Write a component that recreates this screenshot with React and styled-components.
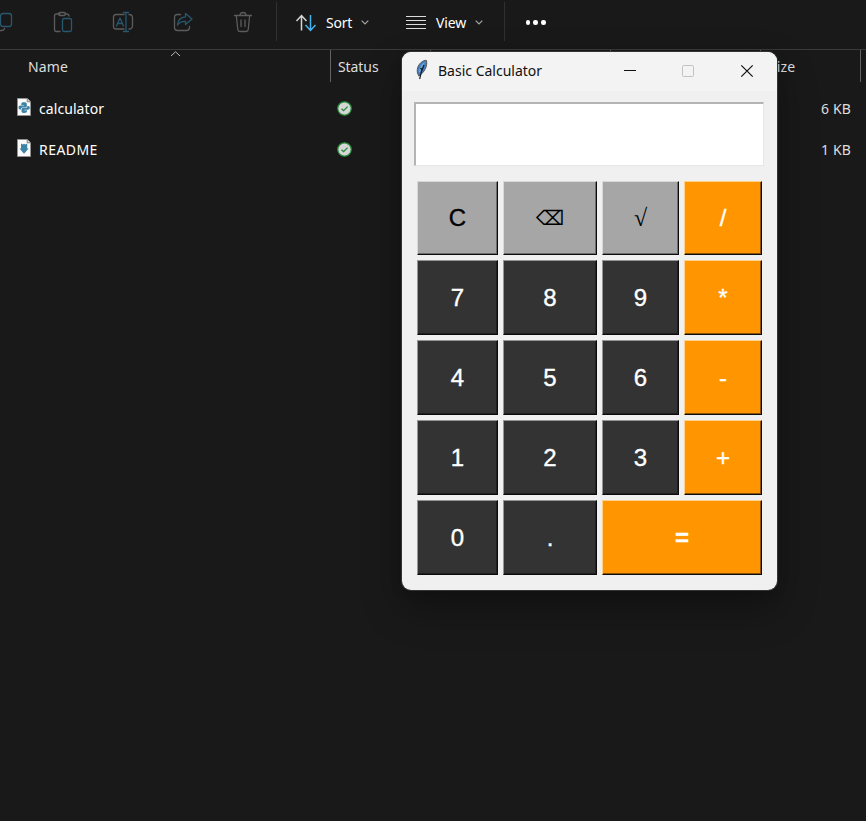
import React from "react";
import styled, { createGlobalStyle } from "styled-components";

const GlobalStyle = createGlobalStyle`
  * { box-sizing: border-box; }
  body { margin: 0; background: #191919; overflow: hidden; }
`;

const Explorer = styled.main`
  position: relative;
  width: 866px;
  height: 821px;
  overflow: hidden;
  background: #191919;
  color: #fff;
  font-family: "Noto Sans", "Open Sans", sans-serif;
  font-size: 14px;
`;

const Toolbar = styled.header`
  display: flex;
  height: 50px;
  border-bottom: 1px solid #3b3b3b;
`;

const IconGroup = styled.div`
  display: flex;
  gap: 36px;
  width: 277px;
  height: 43px;
  margin-left: -9px;
  padding-top: 10px;
  flex: none;
`;

const ToolIcon = styled.svg`
  width: 24px;
  height: 24px;
  flex: none;
  fill: none;
  stroke: #5c5c5c;
  stroke-width: 1.3;
  stroke-linecap: round;
  stroke-linejoin: round;
  .accent { stroke: #28586f; }
`;

const MenuGroup = styled.div`
  display: flex;
  align-items: center;
  width: 229px;
  height: 39px;
  margin: 2px 0 0 8px;
  padding-top: 2px;
  border: solid #303030;
  border-width: 0 1px;
`;

const MenuButton = styled.div`
  display: flex;
  align-items: center;
  width: 110px;
  padding-left: 19px;
  height: 38px;
`;

const MenuLabel = styled.span`
  width: ${(p) => p.$width}px;
  margin-left: ${(p) => p.$gap}px;
  letter-spacing: ${(p) => p.$track}px;
  white-space: nowrap;
`;

const Glyph = styled.svg`
  display: block;
  flex: none;
  fill: none;
  overflow: visible;
`;

const More = styled.div`
  display: flex;
  gap: 3.4px;
  margin: 20px 0 0 20.5px;
`;

const Dot = styled.i`
  width: 4.5px;
  height: 4.5px;
  border-radius: 50%;
  background: #fff;
`;

const ColumnHeader = styled.div`
  display: grid;
  grid-template-columns: 331px 100px 180px 150px 100px;
  height: 32px;
  color: #dedede;
`;

const HeaderCell = styled.div`
  position: relative;
  padding: 7px 0 0 ${(p) => p.$inset}px;
  line-height: 20px;
  letter-spacing: ${(p) => p.$track || 0}px;
  border-right: 1px solid #636363;
`;

const SortMark = styled(Glyph)`
  position: absolute;
  left: 170px;
  top: 1px;
`;

const FileList = styled.div`
  padding-top: 6px;
`;

const FileRow = styled.div`
  display: grid;
  grid-template-columns: 39px 298px 1fr 100px;
  align-items: center;
  height: 41px;
`;

const IconCell = styled.div`
  padding: 0 0 3px 17px;
`;

const FileName = styled.span`
  letter-spacing: ${(p) => p.$track}px;
`;

const FileSize = styled.span`
  padding-right: 15px;
  text-align: right;
  color: #dedede;
  letter-spacing: 0.15px;
`;

const Window = styled.section`
  position: absolute;
  left: 402px;
  top: 52px;
  width: 375px;
  height: 538px;
  border-radius: 9px;
  overflow: hidden;
  background: #f0f0f0;
`;

const WindowShadow = styled.div`
  position: absolute;
  left: 402px;
  top: 52px;
  width: 375px;
  height: 538px;
  border-radius: 9px;
  box-shadow: 0 0 0 1px #343434, 0 18px 40px rgba(0, 0, 0, 0.32), 0 2px 12px rgba(0, 0, 0, 0.15);
`;

const TitleBar = styled.div`
  display: flex;
  height: 39px;
  background: #f3f3f3;
  color: #111;
  padding: 7px 0 0 12px;
`;

const Title = styled.h1`
  width: 186px;
  margin: 2px 0 0 9px;
  font-size: 14px;
  font-weight: 400;
  line-height: 20px;
  letter-spacing: 0;
`;

const WindowControls = styled.div`
  display: flex;
  gap: 46px;
  margin: 6px 0 0 0;
`;

const Display = styled.div`
  width: 350px;
  height: 64px;
  margin: 11px 0 0 12px;
  background: #fff;
  border: solid;
  border-width: 2px 1px 1px 2px;
  border-color: #b4b4b4 #e6e6e6 #e6e6e6 #b4b4b4;
`;

const Keypad = styled.div`
  display: grid;
  grid-template-columns: 81px 94px 77px 78px;
  grid-template-rows: 74px repeat(4, 75px);
  gap: 5px;
  margin: 15px 0 0 15px;
`;

const tones = {
  gray: { bg: "#a6a6a6", fg: "#000", light: "#d8d8d8", shade: "#6c6c6c" },
  dark: { bg: "#333333", fg: "#fff", light: "#959595", shade: "#202020" },
  orange: { bg: "#ff9500", fg: "#fff", light: "#ffd28a", shade: "#8b5200" },
};

const Key = styled.button`
  display: flex;
  align-items: center;
  justify-content: center;
  grid-column: span ${(p) => p.$span || 1};
  padding: 0;
  background: ${(p) => tones[p.$tone].bg};
  color: ${(p) => tones[p.$tone].fg};
  border: solid;
  border-width: 1px 1.5px 1.5px 1px;
  border-color: ${(p) => tones[p.$tone].light} #0c0c0c #0c0c0c ${(p) => tones[p.$tone].light};
  box-shadow: inset -1px -1px 0 ${(p) => tones[p.$tone].shade};
  font: ${(p) => p.$weight || 400} ${(p) => p.$size || 24}px ${(p) => p.$face || '"Liberation Sans", Arial'}, sans-serif;
  -webkit-text-stroke: ${(p) => (p.$face ? 0 : 0.35)}px currentColor;
`;

const keys = [
  { label: "C", tone: "gray" },
  { label: "⌫", tone: "gray", size: 20, face: '"DejaVu Sans"' },
  { label: "√", tone: "gray", size: 24, face: '"Liberation Serif"' },
  { label: "/", tone: "orange" },
  { label: "7" }, { label: "8" }, { label: "9" }, { label: "*", tone: "orange" },
  { label: "4" }, { label: "5" }, { label: "6" }, { label: "-", tone: "orange" },
  { label: "1" }, { label: "2" }, { label: "3" }, { label: "+", tone: "orange" },
  { label: "0" }, { label: "." }, { label: "=", tone: "orange", span: 2, weight: 700 },
];

const Chevron = () => (
  <Glyph width="8" height="5" viewBox="0 0 8 5" stroke="#a5a5a5" strokeWidth="1.2">
    <path d="M.7.7 4 4 7.3.7" />
  </Glyph>
);

const SyncBadge = () => (
  <Glyph width="15" height="15" viewBox="0 0 15 15">
    <circle cx="7.5" cy="7.5" r="6.7" fill="#d6d6d6" stroke="#29913c" strokeWidth="1.2" />
    <path d="m4.5 7.7 2.1 2 4-4.1" stroke="#23893a" strokeWidth="1.3" />
  </Glyph>
);

const FileIcon = ({ python }) => (
  <Glyph width="14" height="18" viewBox="0 0 14 18">
    <path d="M.5.5h9.7l3.3 3.3v13.7H.5Z" fill="#fafafa" stroke="#929292" />
    <path d="M10.2.5v3.3h3.3" fill="#d8d8d8" stroke="#6a6a6a" strokeWidth=".8" />
    {python ? (
      <g fill="#3d83a5">
        <path d="M7 4.3c2 0 2.8.6 2.8 1.8v1.8c0 1-.6 1.5-1.5 1.5H5.6c-1.1 0-1.7.7-1.7 2H3C2 11.4 1.5 10.5 1.5 9.5 1.5 8.2 2.2 7.5 3.4 7.5H7v-.5H4.3v-1c0-1.1.9-1.7 2.7-1.7Z" />
        <path d="M7.3 15c-2 0-2.8-.6-2.8-1.8v-1.8c0-1 .6-1.5 1.5-1.5h2.7c1.1 0 1.7-.7 1.7-2h.9c1 0 1.5.9 1.5 1.9 0 1.3-.7 2-1.9 2H7.3v.5H10v1c0 1.1-.9 1.7-2.7 1.7Z" />
      </g>
    ) : (
      <path d="m4 4.5 1.8 1L7 4.8l1.200.7 2-1v5h1.5L7 14.800l-4.500-5.300H4Z" fill="#3d83a5" />
    )}
  </Glyph>
);

const Feather = () => (
  <Glyph width="15" height="21" viewBox="0 0 15 21">
    <path d="M4.800 17C2.500 13.500 2.500 8 6.500 4 9 1.800 11 1 12.500 1.500c1 5.500-1.500 11.500-7.700 15.500Z" fill="#4680c2" stroke="#555" strokeWidth="1" />
    <path d="M5 13C5.500 8.500 7.500 5.200 11 3 8.500 7 7 10 6 13.500Z" fill="#7badde" />
    <path d="M10 6C8 10.500 6.500 14 5.700 20M7.800 10.500l-1.300-1.500" stroke="#151c28" strokeWidth="1.300" />
  </Glyph>
);

export default function App() {
  return (
    <>
      <GlobalStyle />
      <Explorer>
        <Toolbar>
          <IconGroup>
            <ToolIcon viewBox="0 0 24 24">
              <path d="M3 7.500v10q0 3 3 3h5q2 0 2.500-2" />
              <rect className="accent" x="9.500" y="3.500" width="11" height="13" rx="2.500" />
            </ToolIcon>
            <ToolIcon viewBox="0 0 24 24">
              <path d="M9 4H5.500Q3.500 4 3.500 6v13.500q0 2 2 2H9M14 4h1.500Q18 4 18 6" />
              <rect x="7.500" y="2.500" width="7" height="3" rx="1.500" />
              <rect className="accent" x="11.500" y="8.500" width="9" height="13" rx="1.800" />
            </ToolIcon>
            <ToolIcon viewBox="0 0 24 24">
              <path d="M13 4.500H5Q2.500 4.500 2.500 7v9.500q0 2.500 2.500 2.500h8M18 4.500q3.500 0 3.500 3.500v7.500q0 3.500-3.500 3.500" />
              <path className="accent" d="M12.500 2.500h5M12.500 21.500h5M15 2.500v19M5.500 16l3.500-8 3.500 8M6.600 13.500h4.800" />
            </ToolIcon>
            <ToolIcon viewBox="0 0 24 24">
              <path d="M9.500 4.500h-3Q3.500 4.500 3.500 7.500v10q0 3 3 3h9q3 0 3-3v-1" />
              <path className="accent" d="M14.500 3.500 21 9l-6.500 5.500V11.500Q9.500 11 6.500 15 7 7.500 14.500 6.800Z" />
            </ToolIcon>
            <ToolIcon viewBox="0 0 24 24">
              <path d="M3.500 5.500h17M9 5.500q0-3 3-3t3 3M5.300 5.500l1.500 14q.2 2 2 2h6.400q1.800 0 2-2l1.500-14M10 10v6.500M14 10v6.500" />
            </ToolIcon>
          </IconGroup>
          <MenuGroup>
            <MenuButton>
              <Glyph width="21" height="18" viewBox="0 0 21 18" strokeWidth="1.500">
                <path d="M5.500 16.500V2M.5 7l5-5.500 5 5.500" stroke="#d5d5d5" />
                <path d="M14.500 1v15.500M9.500 11l5 5.500 5-5.500" stroke="#48b2ed" />
              </Glyph>
              <MenuLabel $width={35} $gap={9} $track={-0.25}>Sort</MenuLabel>
              <Chevron />
            </MenuButton>
            <MenuButton>
              <Glyph width="21" height="14" viewBox="0 0 21 14" stroke="#ddd" strokeWidth="1.200">
                <path d="M0 .5h20M0 4.500h20M0 8.500h20M0 12.500h20" />
              </Glyph>
              <MenuLabel $width={39} $gap={9} $track={-0.1}>View</MenuLabel>
              <Chevron />
            </MenuButton>
          </MenuGroup>
          <More><Dot /><Dot /><Dot /></More>
        </Toolbar>
        <ColumnHeader>
          <HeaderCell $inset={28} $track={0.1}>
            Name
            <SortMark width="11" height="6" viewBox="0 0 11 6" stroke="#bbb" strokeWidth="1">
              <path d="M1 5 5.500.800 10 5" />
            </SortMark>
          </HeaderCell>
          <HeaderCell $inset={7} $track={-0.08}>Status</HeaderCell>
          <HeaderCell />
          <HeaderCell />
          <HeaderCell $inset={8} $track={0.15}>Size</HeaderCell>
        </ColumnHeader>
        <FileList>
          <FileRow>
            <IconCell><FileIcon python /></IconCell>
            <FileName $track={0.07}>calculator</FileName>
            <SyncBadge />
            <FileSize>6 KB</FileSize>
          </FileRow>
          <FileRow>
            <IconCell><FileIcon /></IconCell>
            <FileName $track={0.45}>README</FileName>
            <SyncBadge />
            <FileSize>1 KB</FileSize>
          </FileRow>
        </FileList>
        <WindowShadow />
        <Window>
          <TitleBar>
            <Feather />
            <Title>Basic Calculator</Title>
            <WindowControls>
              <Glyph width="12" height="12" viewBox="0 0 12 12" stroke="#111" strokeWidth="1"><path d="M0 5.500h12" /></Glyph>
              <Glyph width="12" height="12" viewBox="0 0 12 12" stroke="#c2c2c2" strokeWidth="1"><rect x=".5" y=".5" width="11" height="11" rx="1" /></Glyph>
              <Glyph width="13" height="12" viewBox="-1 0 13 12" stroke="#111" strokeWidth="1.200"><path d="m.3.3 11.400 11.400M11.700.3.3 11.700" /></Glyph>
            </WindowControls>
          </TitleBar>
          <Display />
          <Keypad>
            {keys.map((k) => (
              <Key key={k.label} $tone={k.tone || "dark"} $span={k.span} $size={k.size} $face={k.face} $weight={k.weight}>
                {k.label}
              </Key>
            ))}
          </Keypad>
        </Window>
      </Explorer>
    </>
  );
}
